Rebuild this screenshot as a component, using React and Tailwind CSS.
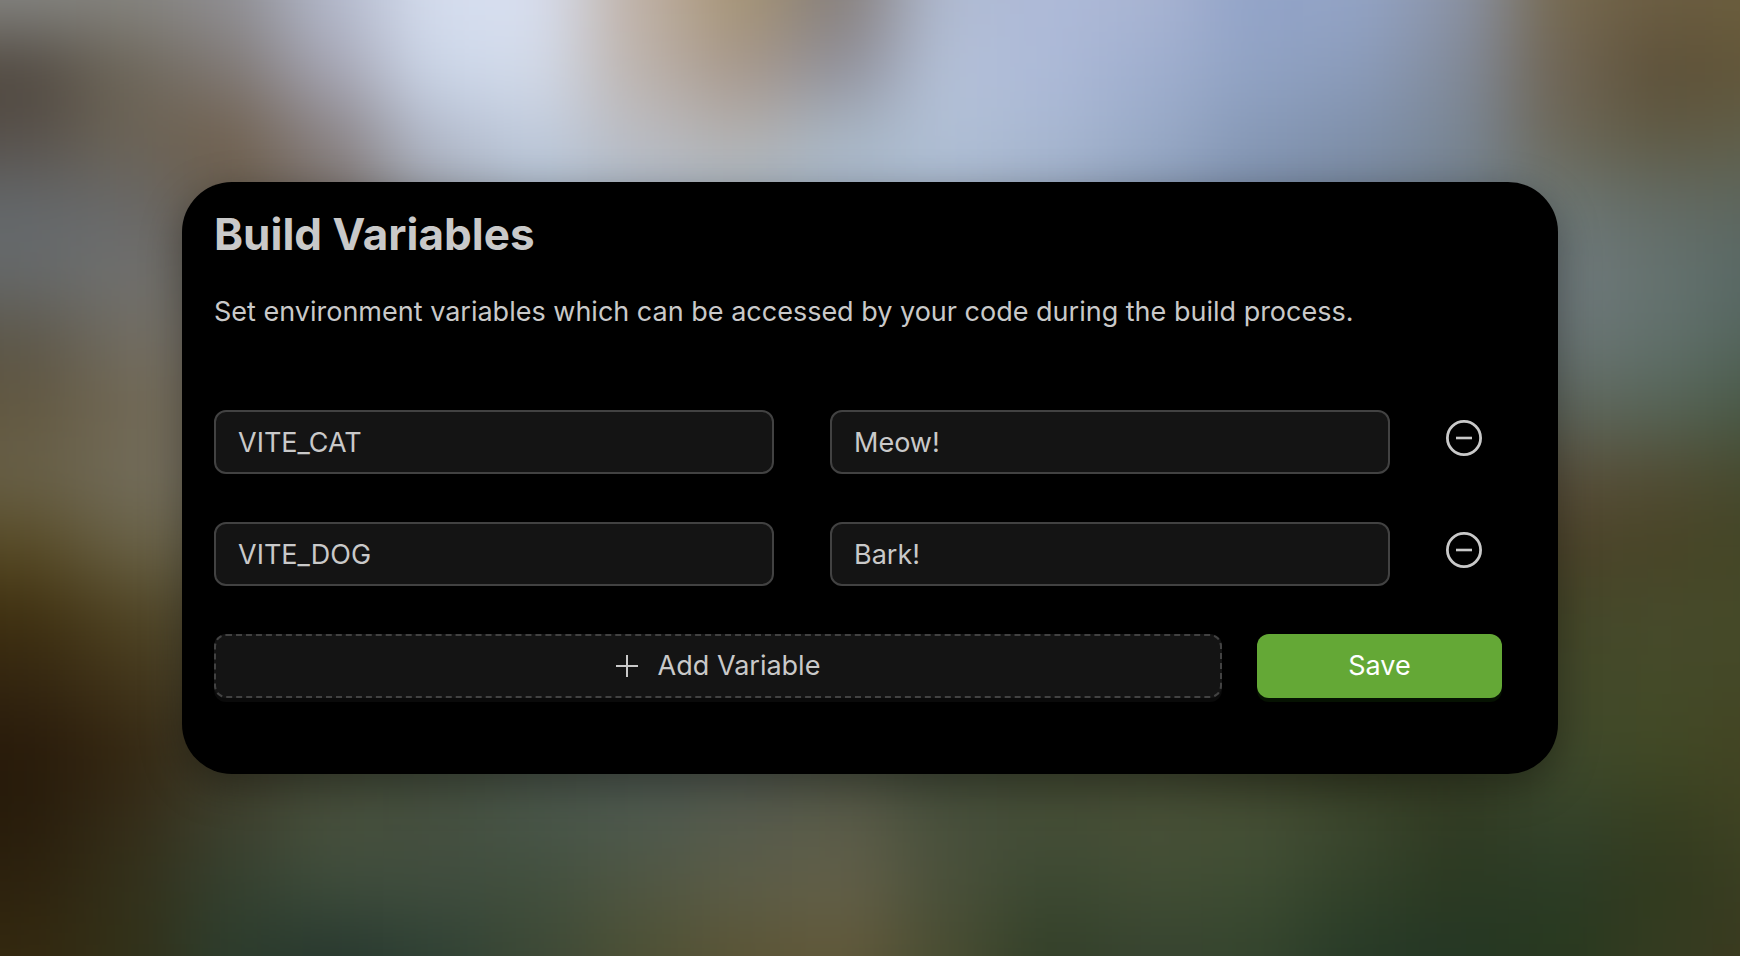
import { useState } from 'react';

const BACKDROP = [
  ['#858582','#85847f','#8f8e92','#b3b9cc','#d5ddee','#d8dff0','#bfb0a4','#a69474','#857d79','#b0bbd2','#aebad8','#a9b5d3','#92a3c8','#93a4c6','#8b94a8','#76694f','#6b5d42','#6b5e3c'],
  ['#4f473e','#6c6558','#7f7874','#a6a6b5','#cdd8ea','#d3dbea','#bcb2ab','#a6968a','#8f8f9a','#b4c1d8','#adbad8','#a0afcf','#91a3c4','#8b9cbb','#828b9b','#6f6453','#5d5038','#625638'],
  ['#57504a','#6b6355','#71614f','#8a8385','#b4bcce','#c2cddf','#bbbcc2','#b3b0ae','#a9b7c5','#b1c0d6','#a9b8d2','#9aabc8','#8799b7','#8091ac','#7a8796','#6c6757','#5f5a44','#615f49'],
  ['#64686b','#686868','#6a5e4e','#7b7069','#a0a5ae','#adbccd','#acb9c8','#acbac8','#a8b8cc','#a8b8cd','#9daec6','#8c9eb9','#7c8eaa','#76869b','#717e8a','#6b7673','#636b65','#5c665d'],
  ['#66696a','#707170','#6b655b','#70695e','#8b8b8b','#909090','#909090','#909090','#909090','#909090','#909090','#808080','#707a88','#707b85','#6f7a7f','#707a7d','#65726f','#576764'],
  ['#5c5648','#716c61','#757067','#706a60','#707070','#707070','#707070','#707070','#707070','#707070','#707070','#707070','#667070','#6a7377','#6d7577','#6b7676','#61706b','#52635a'],
  ['#625841','#706752','#777062','#777063','#656560','#656560','#656560','#656560','#656560','#656560','#656560','#656560','#656560','#656560','#616761','#5f675d','#566456','#475744'],
  ['#686047','#716b59','#777162','#6e6757','#555','#555','#555','#555','#555','#555','#555','#555','#555','#555','#5d5949','#594f3b','#514c33','#45492d'],
  ['#574a25','#686044','#6d6751','#5e5942','#4b4e44','#4b4e44','#4b4e44','#4b4e44','#4b4e44','#4b4e44','#4b4e44','#4b4e44','#4b4e44','#4b4e44','#50482e','#4c432a','#484426','#434626'],
  ['#3f3010','#4f4322','#56513a','#50503c','#464a3c','#464a3c','#464a3c','#464a3c','#464a3c','#464a3c','#464a3c','#464a3c','#464a3c','#3f4430','#444329','#444729','#474a2b','#454a28'],
  ['#332510','#413419','#4b4731','#4a5038','#464e3e','#494f42','#4a4f46','#4a4f46','#4a4f40','#444b3a','#454a34','#434934','#3f432e','#393e2b','#3e4228','#42482a','#444a28','#444727'],
  ['#281a0a','#332510','#413d29','#434936','#46513f','#4c564a','#505953','#515951','#4d5443','#424b38','#444a31','#414830','#393e27','#33381f','#394026','#3f492b','#414925','#434322'],
  ['#281c0b','#342c18','#3d402e','#48503d','#454f3f','#485548','#4d594d','#555a4c','#5a5b49','#48503c','#444d37','#485037','#465036','#3c472e','#303a22','#35432b','#363e20','#404323'],
  ['#2d220e','#333019','#34402f','#3d4c3b','#404d3e','#414f3d','#505642','#5c5d47','#636049','#4a503a','#3b4831','#414d34','#3d4c32','#324129','#2b3922','#2b3b25','#31391e','#3a3e22'],
  ['#34290f','#323018','#2c3c2c','#27372e','#2e4033','#3c4835','#4c5034','#5b5435','#615839','#484c31','#323f28','#374330','#34442d','#273a27','#243624','#28391f','#353b20','#3b3a1f'],
];

function Backdrop() {
  return (
    <svg
      className="absolute inset-0 h-full w-full"
      viewBox="-24 0 1700 1400"
      preserveAspectRatio="none"
      aria-hidden="true"
    >
      <defs>
        <filter id="soften" filterUnits="userSpaceOnUse" x="-300" y="-300" width="2300" height="2000" colorInterpolationFilters="sRGB">
          <feGaussianBlur stdDeviation="38 50" />
        </filter>
      </defs>
      <g filter="url(#soften)">
        {BACKDROP.map((row, r) =>
          row.map((fill, c) => {
            const left = c === 0 ? -300 : c * 100 - 50;
            const right = c === row.length - 1 ? 2000 : c * 100 + 51;
            const top = r === 0 ? -300 : r * 100 - 50;
            const bottom = r === BACKDROP.length - 1 ? 1700 : r * 100 + 51;
            return <rect key={`${r}-${c}`} x={left} y={top} width={right - left} height={bottom - top} fill={fill} />;
          })
        )}
      </g>
    </svg>
  );
}

function MinusCircle() {
  return (
    <svg className="size-9" viewBox="0 0 36 36" fill="none" stroke="currentColor" aria-hidden="true">
      <circle cx="18" cy="18" r="16.6" strokeWidth="2.8" />
      <path d="M10 18h16" strokeWidth="2.6" />
    </svg>
  );
}

function PlusIcon() {
  return (
    <svg className="size-[22px]" viewBox="0 0 22 22" fill="none" stroke="currentColor" strokeWidth="2" aria-hidden="true">
      <path d="M11 0v22M0 11h22" />
    </svg>
  );
}

const FIELD =
  'h-16 w-full min-w-0 rounded-xl border-2 border-[#424242] bg-[#141414] px-[22px] text-[27px] leading-11 text-[#c9c9c9] outline-none focus:border-[#64a836]';

export default function App() {
  const [variables, setVariables] = useState([
    { id: 1, name: 'VITE_CAT', value: 'Meow!' },
    { id: 2, name: 'VITE_DOG', value: 'Bark!' },
  ]);

  const update = (id, key, text) =>
    setVariables((list) => list.map((v) => (v.id === id ? { ...v, [key]: text } : v)));
  const remove = (id) => setVariables((list) => list.filter((v) => v.id !== id));
  const add = () => setVariables((list) => [...list, { id: Date.now(), name: '', value: '' }]);

  return (
    <div className="relative flex min-h-screen items-center justify-center overflow-hidden bg-[#454a3c] p-6 font-['Inter','Liberation_Sans',sans-serif] text-[27px] leading-11 text-[#c9c9c9] md:px-[182px]">
      <Backdrop />
      <main className="relative w-full rounded-[50px] bg-black pt-[22px] pr-14 pb-[76px] pl-8 shadow-[0_12px_40px_rgba(0,0,0,0.35)]">
        <h1 className="text-[44px] leading-[60px] font-bold">Build Variables</h1>
        <p className="mt-[26px]">
          Set environment variables which can be accessed by your code during the build process.
        </p>
        <form className="mt-[76px] flex flex-col gap-12" onSubmit={(e) => e.preventDefault()}>
          {variables.map((v) => (
            <div key={v.id} className="flex gap-14">
              <input
                className={FIELD}
                aria-label="Variable name"
                value={v.name}
                onChange={(e) => update(v.id, 'name', e.target.value)}
              />
              <input
                className={FIELD}
                aria-label="Variable value"
                value={v.value}
                onChange={(e) => update(v.id, 'value', e.target.value)}
              />
              <button
                type="button"
                className="mt-[10px] mr-5 size-9 shrink-0 cursor-pointer"
                aria-label={`Remove ${v.name}`}
                onClick={() => remove(v.id)}
              >
                <MinusCircle />
              </button>
            </div>
          ))}
          <div className="flex gap-[35px]">
            <button
              type="button"
              className="flex h-16 flex-1 cursor-pointer items-center justify-center gap-5 rounded-xl border-2 border-dashed border-[#424242] bg-[#141414] shadow-[0_4px_0_rgba(255,255,255,0.04)]"
              onClick={add}
            >
              <PlusIcon />
              Add Variable
            </button>
            <button
              type="submit"
              className="h-16 w-[245px] cursor-pointer rounded-xl bg-[#64a836] text-white shadow-[0_4px_0_rgba(60,180,20,0.1)]"
            >
              Save
            </button>
          </div>
        </form>
      </main>
    </div>
  );
}
